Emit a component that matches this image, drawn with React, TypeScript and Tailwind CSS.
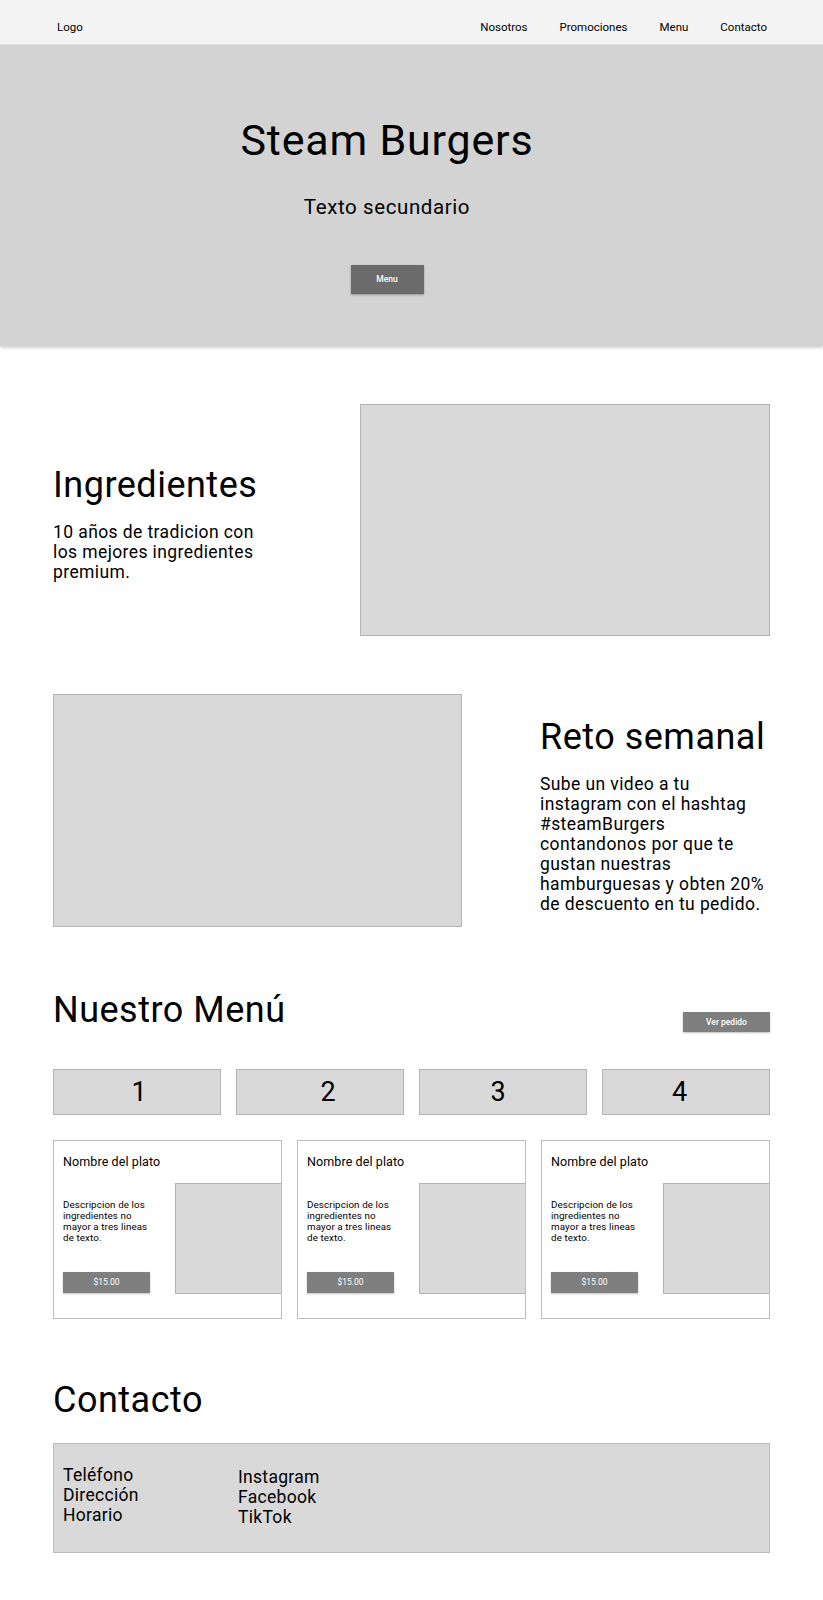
const navLinks = ["Nosotros", "Promociones", "Menu", "Contacto"];
const tabs = [
  { n: "1", pad: "pl-[4px]" },
  { n: "2", pad: "pl-[16px]" },
  { n: "3", pad: "pr-[10px]" },
  { n: "4", pad: "pr-[13px]" },
];
const dishes = [0, 1, 2];

// ─── Pieces ───────────────────────────────────────────────────────────────────

function Placeholder({ className = "" }: { className?: string }) {
  return <div className={`border border-[#b4b4b4] bg-[#d9d9d9] ${className}`} />;
}

function DishCard() {
  return (
    <div className="flex h-[179px] flex-col border border-[#bdbdbd] bg-white">
      <p className="pl-[9px] pt-[13px] text-[12.5px] leading-[15px] tracking-[0.1px]">Nombre del plato</p>
      <div className="mt-[14px] flex justify-between">
        <div className="pl-[9px] pt-[16px]">
          <p className="text-[9.8px] leading-[11px] tracking-[0.1px]">
            Descripcion de los
            <br />
            ingredientes no
            <br />
            mayor a tres lineas
            <br />
            de texto.
          </p>
          <button
            type="button"
            className="mt-[29px] flex h-[21px] w-[87px] items-center justify-center bg-[#7f7f7f] text-[8.5px] text-white shadow-[0_1px_2px_rgba(0,0,0,0.25)]"
          >
            $15.00
          </button>
        </div>
        <div className="h-[111px] w-[106px] border border-r-0 border-[#b4b4b4] bg-[#d9d9d9]" />
      </div>
    </div>
  );
}

// ─── Page ─────────────────────────────────────────────────────────────────────

export default function App() {
  return (
    <div className="min-h-[1600px] bg-white font-['Roboto',sans-serif] text-black">
      {/* Header */}
      <header className="flex h-[45px] items-center justify-between border-b border-[#e2e2e2] bg-[#f4f4f4] pl-[57px] pr-[56px] pt-[11px] text-[11.5px]">
        <span>Logo</span>
        <nav className="flex gap-[32px]">
          {navLinks.map((l) => (
            <span key={l}>{l}</span>
          ))}
        </nav>
      </header>

      {/* Hero */}
      <section className="flex h-[301px] flex-col items-center bg-[#d3d3d3] pr-[49px] pt-[74px] shadow-[0_2px_3px_rgba(0,0,0,0.18)]">
        <h1 className="text-[43px] leading-none tracking-[0.8px]">Steam Burgers</h1>
        <p className="mt-[35px] text-[20.5px] leading-none tracking-[0.6px]">Texto secundario</p>
        <button
          type="button"
          className="mt-[47px] flex h-[29px] w-[73px] items-center justify-center bg-[#6b6b6b] text-[8.5px] font-medium text-white shadow-[0_1px_2px_rgba(0,0,0,0.3)]"
        >
          Menu
        </button>
      </section>

      <main className="px-[53px]">
        {/* Ingredientes */}
        <section className="mt-[58px] flex items-center justify-between">
          <div className="pt-[9px]">
            <h2 className="text-[36px] leading-none tracking-[0.5px]">Ingredientes</h2>
            <p className="mt-[19px] text-[17.5px] leading-[20px] tracking-[0.4px]">
              10 años de tradicion con
              <br />
              los mejores ingredientes
              <br />
              premium.
            </p>
          </div>
          <Placeholder className="h-[232px] w-[410px]" />
        </section>

        {/* Reto semanal */}
        <section className="mt-[58px] flex items-center">
          <Placeholder className="h-[233px] w-[409px]" />
          <div className="ml-[78px] pt-[11px]">
            <h2 className="text-[36px] leading-none tracking-[0.5px]">Reto semanal</h2>
            <p className="mt-[19px] text-[17.5px] leading-[20px] tracking-[0.4px]">
              Sube un video a tu
              <br />
              instagram con el hashtag
              <br />
              #steamBurgers
              <br />
              contandonos por que te
              <br />
              gustan nuestras
              <br />
              hamburguesas y obten 20%
              <br />
              de descuento en tu pedido.
            </p>
          </div>
        </section>

        {/* Menú */}
        <section className="mt-[65px]">
          <div className="flex items-start justify-between">
            <h2 className="text-[36px] leading-none tracking-[0.5px]">Nuestro Menú</h2>
            <button
              type="button"
              className="mt-[20px] flex h-[20px] w-[87px] items-center justify-center bg-[#7f7f7f] text-[8.5px] font-medium text-white shadow-[0_1px_2px_rgba(0,0,0,0.25)]"
            >
              Ver pedido
            </button>
          </div>

          <div className="mt-[37px] grid grid-cols-4 gap-[15px]">
            {tabs.map((t) => (
              <div
                key={t.n}
                className={`flex h-[46px] items-center justify-center border border-[#b4b4b4] bg-[#d9d9d9] text-[27px] leading-none ${t.pad}`}
              >
                {t.n}
              </div>
            ))}
          </div>

          <div className="mt-[25px] grid grid-cols-3 gap-[15px]">
            {dishes.map((d) => (
              <DishCard key={d} />
            ))}
          </div>
        </section>

        {/* Contacto */}
        <section className="mt-[63px]">
          <h2 className="text-[36px] leading-none tracking-[0.5px]">Contacto</h2>
          <div className="mt-[25px] flex h-[110px] border border-[#bdbdbd] bg-[#d9d9d9] pl-[9px] text-[17.5px] leading-[20px] tracking-[0.3px]">
            <div className="w-[175px] pt-[21px]">
              <p>Teléfono</p>
              <p>Dirección</p>
              <p>Horario</p>
            </div>
            <div className="pt-[23px]">
              <p>Instagram</p>
              <p>Facebook</p>
              <p>TikTok</p>
            </div>
          </div>
        </section>
      </main>
    </div>
  );
}
